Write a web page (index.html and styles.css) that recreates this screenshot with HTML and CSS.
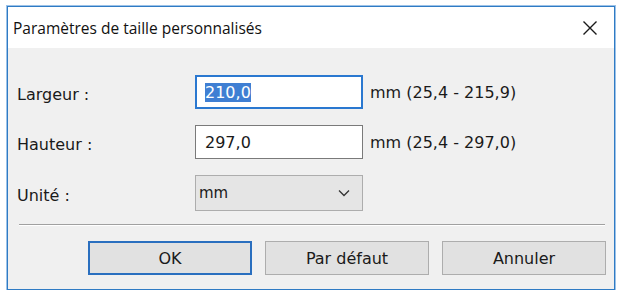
FILE: index.html
```html
<!DOCTYPE html>
<html lang="fr">
<head>
    <meta charset="UTF-8">
    <title>Paramètres de taille personnalisés</title>
    <link rel="stylesheet" href="styles.css">
</head>
<body>
    <div class="dialog">
        <div class="titlebar">
            <span class="title">Paramètres de taille personnalisés</span>
            <svg class="close" width="16" height="16" viewBox="0 0 16 16">
                <path d="M1.5 1.5 L14.5 14.5 M14.5 1.5 L1.5 14.5" stroke="#1a1a1a" stroke-width="1.4" fill="none"/>
            </svg>
        </div>

        <div class="content">
            <div class="form">
                <label for="width">Largeur :</label>
                <div class="field focused"><span class="selected">210,0</span></div>
                <span class="range">mm (25,4 - 215,9)</span>

                <label for="height">Hauteur :</label>
                <div class="field">297,0</div>
                <span class="range">mm (25,4 - 297,0)</span>

                <label for="unit">Unité :</label>
                <div class="combo">
                    <span>mm</span>
                    <svg width="12" height="8" viewBox="0 0 12 8">
                        <path d="M1 1.5 L6 6.5 L11 1.5" stroke="#333" stroke-width="1.3" fill="none"/>
                    </svg>
                </div>
                <span></span>
            </div>

            <div class="separator"></div>

            <div class="buttons">
                <button class="default">OK</button>
                <button>Par défaut</button>
                <button>Annuler</button>
            </div>
        </div>
    </div>
</body>
</html>
```

FILE: styles.css
```css
body {
    margin: 0;
    background: #ffffff;
    font-family: 'DejaVu Sans', Verdana, sans-serif;
    color: #1a1a1a;
}

.dialog {
    margin: 6px 0 0 7px;
    width: 608px;
    height: 284px;
    box-sizing: border-box;
    border: 1px solid #2f7bc4;
    box-shadow: 0 0 0 1px #9cc2e8;
    background: #f0f0f0;
}

.titlebar {
    height: 41px;
    background: #ffffff;
    display: flex;
    align-items: center;
    justify-content: space-between;
    padding: 0 16px 0 5px;
}

.title {
    font-family: 'Open Sans', 'Noto Sans', sans-serif;
    font-size: 15.5px;
    color: #111;
}

.content {
    padding: 27px 8px 0 9px;
}

.form {
    display: grid;
    grid-template-columns: 178px 168px auto;
    row-gap: 16px;
    align-items: center;
    font-size: 16px;
}

.form label {
    padding-top: 4px;
}

.field {
    height: 34px;
    box-sizing: border-box;
    border: 1px solid #7a7a7a;
    background: #ffffff;
    padding: 0 9px;
    display: flex;
    align-items: center;
}

.field.focused {
    border: 2px solid #2a78d0;
    padding-left: 8px;
}

.selected {
    background: #3f7fd3;
    color: #ffffff;
}

.range {
    margin-left: 7px;
}

.combo {
    height: 36px;
    box-sizing: border-box;
    border: 1px solid #adadad;
    background: #e5e5e5;
    display: flex;
    align-items: center;
    justify-content: space-between;
    padding: 0 12px 0 3px;
    font-size: 15px;
}

.separator {
    height: 1px;
    background: #a0a0a0;
    border-bottom: 1px solid #ffffff;
    margin: 13px 1px 15px 2px;
}

.buttons {
    display: flex;
    justify-content: flex-end;
    gap: 13px;
}

button {
    width: 164px;
    height: 34px;
    box-sizing: border-box;
    border: 1px solid #adadad;
    background: #e1e1e1;
    font-family: inherit;
    font-size: 16px;
    color: #1a1a1a;
}

button.default {
    border: 2px solid #2a6fbf;
}
```
